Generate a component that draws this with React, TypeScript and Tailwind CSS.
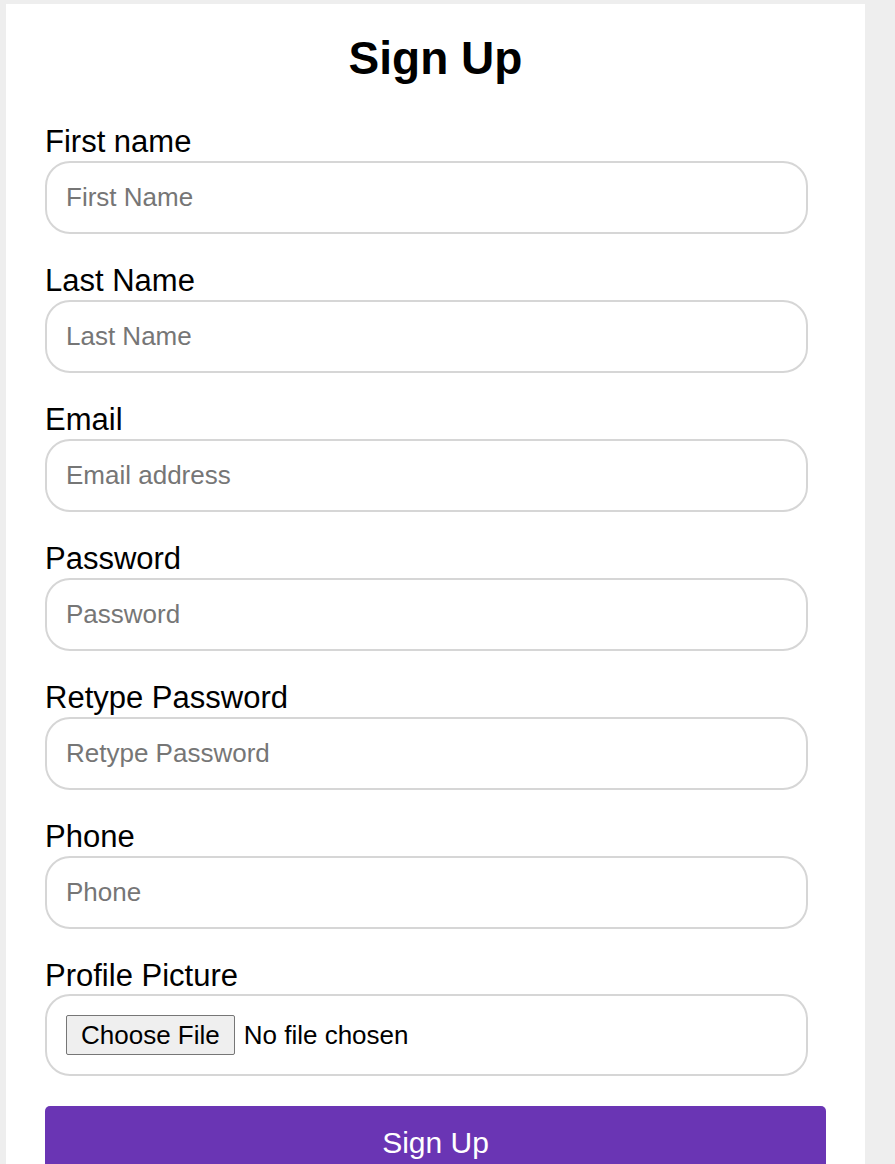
const fields = [
  { label: "First name", placeholder: "First Name", type: "text" },
  { label: "Last Name", placeholder: "Last Name", type: "text" },
  { label: "Email", placeholder: "Email address", type: "email" },
  { label: "Password", placeholder: "Password", type: "password" },
  { label: "Retype Password", placeholder: "Retype Password", type: "password" },
  { label: "Phone", placeholder: "Phone", type: "tel" },
];

export default function App() {
  return (
    <div className="min-h-screen bg-[#eeeeee] pt-[4px] font-['Liberation_Sans',Arial,sans-serif] text-black">
      <form className="ml-[6px] w-[859px] bg-white px-[39px] pt-[28px] pb-[40px]">
        <h2 className="mb-[40px] text-center text-[46px] font-bold leading-[52px]">Sign Up</h2>
        {fields.map((f) => (
          <div key={f.label} className="mb-[29px]">
            <label className="block text-[31px] leading-[36px]">{f.label}</label>
            <input
              type={f.type}
              placeholder={f.placeholder}
              className="mt-[1px] block h-[73px] w-[763px] rounded-[25px] border-2 border-[#d6d6d6] bg-white px-[19px] text-[26px] outline-none placeholder:text-[#767676]"
            />
          </div>
        ))}
        <div className="mb-[30px]">
          <label className="block text-[31px] leading-[36px]">Profile Picture</label>
          <div className="flex h-[82px] w-[763px] items-center rounded-[25px] border-2 border-[#d6d6d6] px-[19px]">
            <input
              type="file"
              className="text-[26px] leading-[30px] file:mr-[9px] file:rounded-[2px] file:border file:border-[#767676] file:bg-[#efefef] file:px-[14px] file:py-[4px] file:text-[26px] file:leading-[30px] file:text-black"
            />
          </div>
        </div>
        <button
          type="button"
          className="block h-[74px] w-full rounded-[5px] bg-[#6a35b4] text-[30px] leading-[34px] text-white"
        >
          Sign Up
        </button>
      </form>
    </div>
  );
}
